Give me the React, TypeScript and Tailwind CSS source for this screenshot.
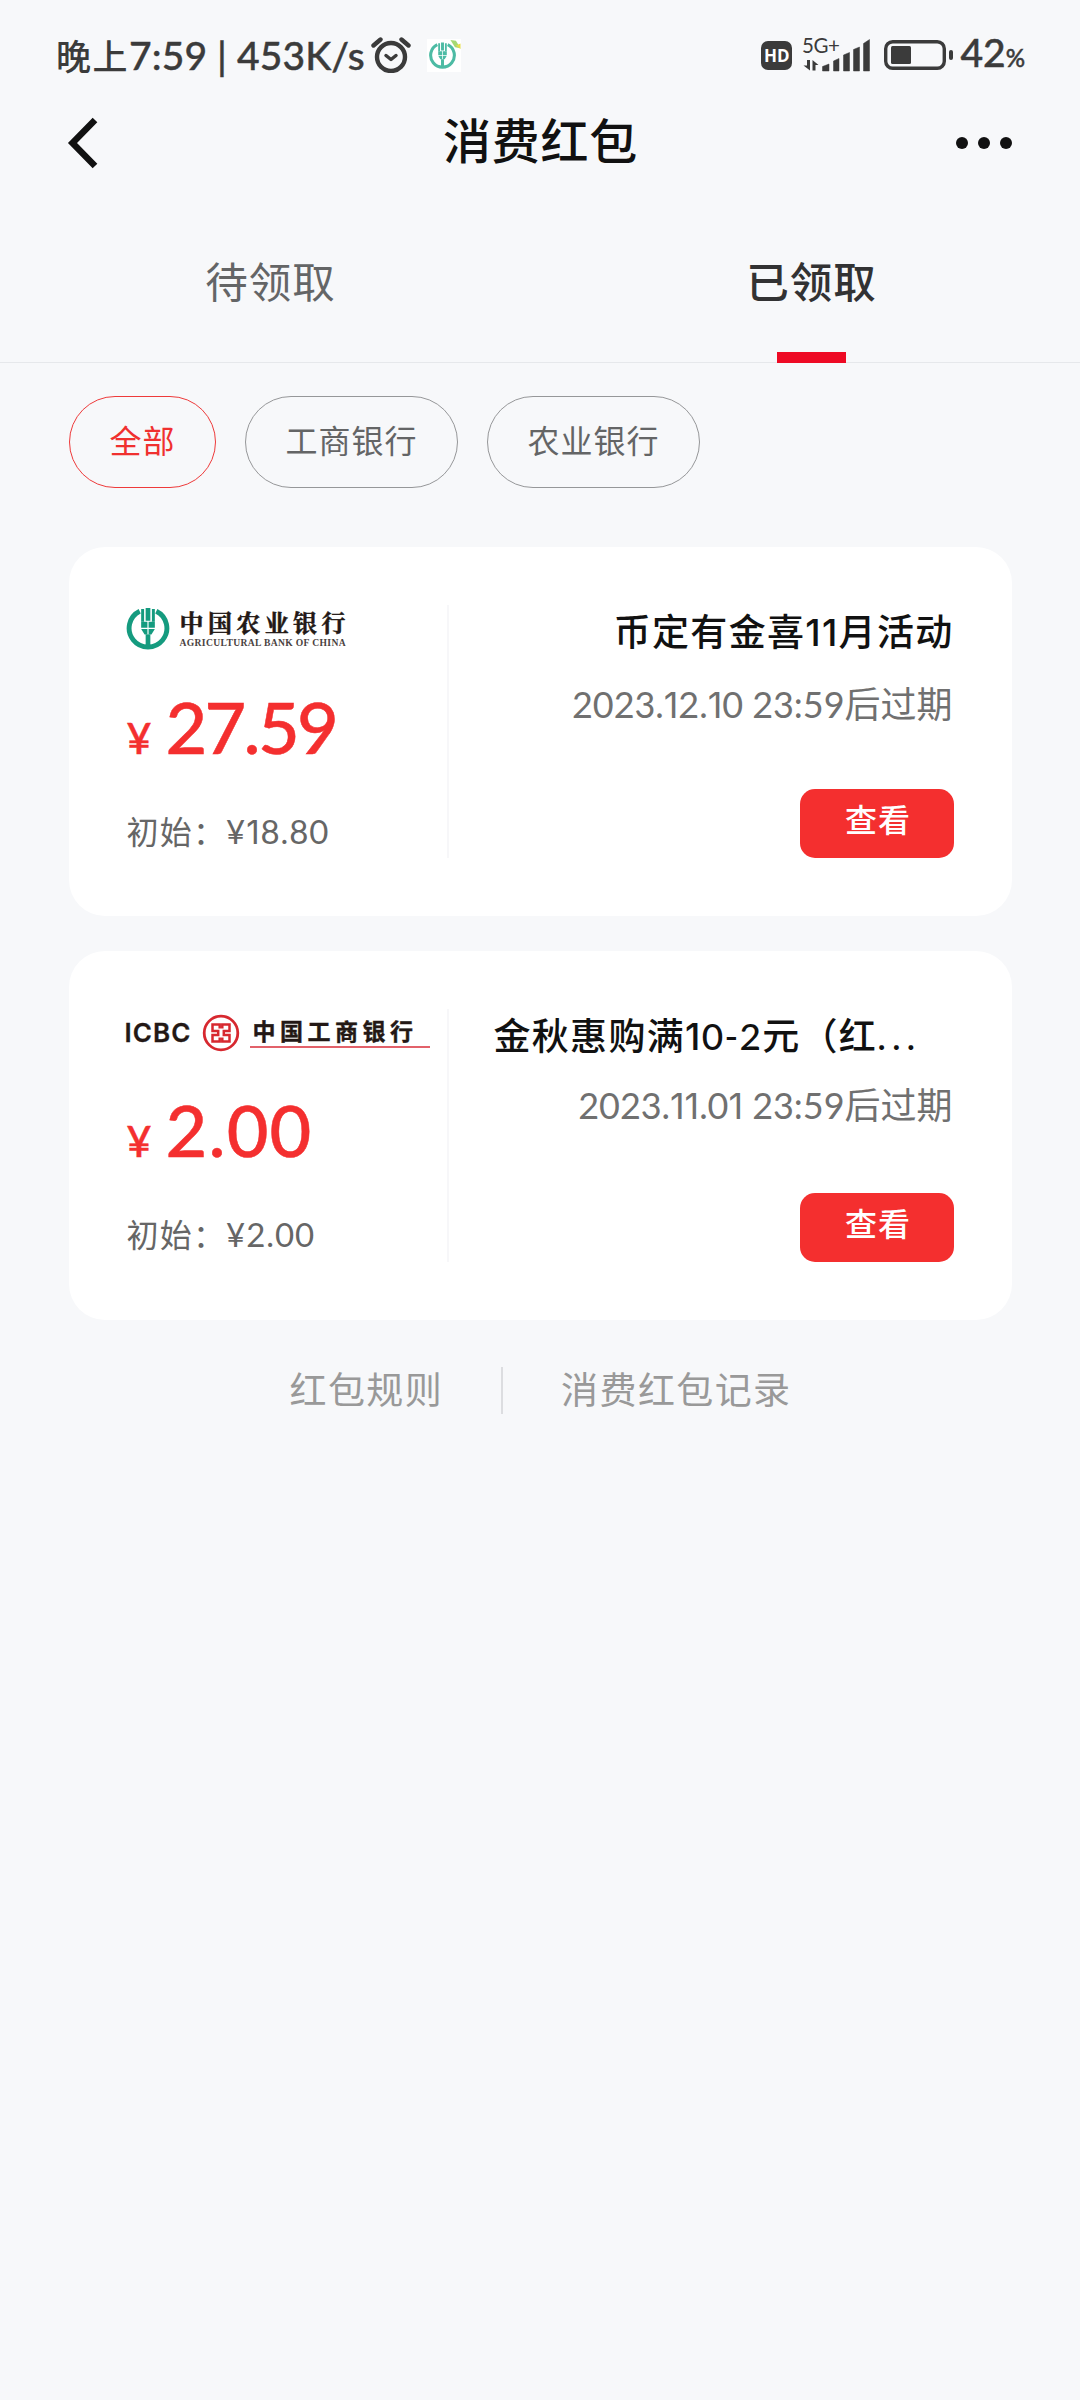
import * as React from "react"

import { useState } from "react";

interface RedPacket {
  id: number;
  bank: "abc" | "icbc";
  amount: string;
  initial: string;
  title: string;
  more?: boolean;
  expire: string;
}

const packets: RedPacket[] = [
  { id: 1, bank: "abc", amount: "27.59", initial: "18.80", title: "币定有金喜11月活动", expire: "2023.12.10 23:59" },
  { id: 2, bank: "icbc", amount: "2.00", initial: "2.00", title: "金秋惠购满10-2元（红", more: true, expire: "2023.11.01 23:59" },
];

const filters = ["全部", "工商银行", "农业银行"];

// the 1 is drawn without a foot, narrower than the other digits
function Figures({ children }: { children: string }) {
  return (
    <>
      {children.split(/(1+)/).map((part, i) =>
        part.startsWith("1") ? <span key={i} className="font-['Inter',sans-serif] leading-none">{part}</span> : part
      )}
    </>
  );
}

function AbcMark({ className, color }: { className: string; color: string }) {
  return (
    <svg viewBox="0 0 44 44" className={className} fill="none">
      <path d="M13.500 4.300A19.300 19.300 0 1 0 30.500 4.300" stroke={color} strokeWidth="5" />
      <path d="M15 2h3v13h-3zM19.600 1h4.800v13h-4.800zM26 2h3v13h-3z" fill={color} />
      <path d="M15 15h6.400v6.200H15zM22.600 15H29v6.200h-6.400zM15 22.400h6.400v5.800h-2.900zM22.600 22.400H29l-3.500 5.800h-2.900z" fill={color} />
      <path d="M19.600 28h4.800v12h-4.800z" fill={color} />
    </svg>
  );
}

function AbcLogo() {
  return (
    <div className="flex h-[44px] items-center gap-[10px] pt-[3px]">
      <AbcMark className="h-[43px] w-[44px]" color="#159b7f" />
      <div className="flex flex-col">
        <span className="font-['Noto_Serif_CJK_SC','Noto_Sans_CJK_SC',serif] text-[24px] leading-[25px] font-bold tracking-[4.4px] whitespace-nowrap text-[#231815] [-webkit-text-stroke:0.5px]">中国农业银行</span>
        <span className="mt-[3px] font-['Liberation_Serif',serif] text-[9.6px] leading-[12px] font-bold tracking-[0.35px] whitespace-nowrap text-[#4a4241]">AGRICULTURAL BANK OF CHINA</span>
      </div>
    </div>
  );
}

function IcbcLogo() {
  return (
    <div className="flex h-[44px] items-center">
      <span className="mt-[4px] ml-[-1px] w-[77px] font-['Inter',sans-serif] text-[26px] leading-[30px] font-semibold tracking-[1.1px] text-[#231815] [-webkit-text-stroke:0.3px]">ICBC</span>
      <svg viewBox="0 0 38 38" className="mt-[4px] h-[38px] w-[38px]" fill="none" stroke="#d7282f">
        <circle cx="19" cy="19" r="16.800" strokeWidth="2.800" />
        <path d="M17.700 14.500V10.500H10.500v6.500h5.700v4h-5.700v6.500h7.200v-4M20.300 14.500V10.500h7.200v6.500h-5.700v4h5.700v6.500h-7.200v-4" strokeWidth="2.500" />
      </svg>
      <div className="mt-[5px] ml-[10px] w-[180px] border-b-2 border-[#e2616a] pl-[3px]">
        <span className="block pb-[4px] font-['Noto_Sans_CJK_SC',sans-serif] text-[23px] leading-[24px] font-bold tracking-[4.500px] whitespace-nowrap text-[#231815] [-webkit-text-stroke:0.4px]">中国工商银行</span>
      </div>
    </div>
  );
}

function StatusBar() {
  return (
    <div className="flex h-[110px] items-center justify-between pr-[55px] pl-[56px] text-[#3b3b3b]">
      <div className="flex items-center">
        <span className="text-[35px] leading-[50px] font-medium tracking-[1.5px] whitespace-nowrap">
          晚上<span className="text-[39px] tracking-[0.1px] [-webkit-text-stroke:0.4px]">7:59 | 453K/s</span>
        </span>
        <svg viewBox="0 0 40 36" className="ml-[6px] h-[36px] w-[40px]" fill="none" stroke="#3b3b3b" strokeLinecap="round">
          <circle cx="20" cy="20" r="14" strokeWidth="4.400" />
          <path d="M2.500 8.500 9.500 2.500M30.500 2.500l7 6" strokeWidth="4.400" />
          <path d="m15 18.500 5 4 5-4" strokeWidth="3.500" strokeLinejoin="round" />
        </svg>
        <div className="relative ml-[16px] flex h-[33px] w-[34px] items-center justify-center bg-white">
          <AbcMark className="mr-[3px] h-[27px] w-[27px]" color="#4dbba4" />
          <svg viewBox="0 0 12 12" className="absolute top-0 right-0 h-[11px] w-[12px]">
            <path d="M1 1 7 2l5 8-6-1z" fill="#a5d873" />
            <path d="m7 7 5-2v6z" fill="#e3dc4b" />
          </svg>
        </div>
      </div>
      <div className="flex items-center">
        <div className="flex h-[29px] w-[31px] items-center justify-center rounded-[7px] bg-[#3b3b3b] font-['Open_Sans',sans-serif] text-[17px] leading-none font-bold text-white">HD</div>
        <svg viewBox="0 -8 70 44" className="mt-[-8px] ml-[10px] h-[44px] w-[70px]" fill="#3b3b3b">
          <text x="0" y="15.500" fontSize="20.500" fontFamily="Lato" textLength="38">5G+</text>
          <path d="M20.500 34v-4.500l6.500-2.500v7zM31.500 34V24l5.500-2.500V34zM41.500 34V18l6-2.500V34zM51.500 34V12.500l6-2.500V34zM61.500 34V6.500l6-4V34z" stroke="#3b3b3b" strokeWidth="0.500" strokeLinejoin="round" />
          <path d="M5 23h3v10.500L1.500 28.500H5zM10.500 33.500V23l6 5h-3v5.500z" />
        </svg>
        <svg viewBox="0 0 70 30" className="ml-[12px] h-[30px] w-[70px]" fill="none">
          <rect x="1.700" y="1.700" width="58.600" height="26.600" rx="7" stroke="#3b3b3b" strokeWidth="3.400" />
          <rect x="7" y="6" width="20" height="18" rx="1.500" fill="#3b3b3b" />
          <rect x="65" y="10" width="4" height="10" rx="2" fill="#3b3b3b" />
        </svg>
        <span className="ml-[6px] text-[39px] leading-[50px] font-medium whitespace-nowrap [-webkit-text-stroke:0.5px]">
          42<span className="text-[24px]">%</span>
        </span>
      </div>
    </div>
  );
}

function PacketCard({ packet }: { packet: RedPacket }) {
  return (
    <div className="flex h-[369px] w-[943px] rounded-[36px] bg-white">
      <div className="my-[58px] flex w-[380px] flex-col border-r-2 border-[#f7f7f9] pl-[57px]">
        {packet.bank === "abc" ? <AbcLogo /> : <IcbcLogo />}
        <div className="mt-[41px] flex h-[72px] items-baseline leading-[72px] font-medium text-[#f42f2f] [-webkit-text-stroke:0.5px]">
          <span className="w-[40px] pl-[1px] text-[43px]">¥</span>
          <span className={`text-[72px] ${packet.bank === "abc" ? "tracking-[-2.7px]" : "tracking-[1.2px]"}`}>{packet.amount}</span>
        </div>
        <div className="mt-[42px] pl-[1px] text-[32px] leading-[54px] tracking-[1.2px] whitespace-nowrap text-[#666]">
          初始：<span className="text-[33px] tracking-[0.9px]">¥<Figures>{packet.initial}</Figures></span>
        </div>
      </div>
      <div className="flex flex-1 flex-col items-end pt-[59px] pr-[58px]">
        <div className={`h-[52px] w-[460px] text-[37px] leading-[52px] font-medium tracking-[1.3px] whitespace-nowrap text-[#111] ${packet.bank === "abc" ? "text-right" : "text-left"}`}>
          <Figures>{packet.title}</Figures>
          {packet.more && <span className="tracking-[6px]">...</span>}
        </div>
        <div className={`${packet.bank === "abc" ? "mt-[20px] mb-[59px]" : "mt-[17px] mb-[62px]"} mr-[1px] h-[52px] text-[36px] leading-[52px] whitespace-nowrap text-[#707070]`}>
          <span className="tracking-[-0.05px]"><Figures>{packet.expire}</Figures></span>后过期
        </div>
        <button className="flex h-[69px] w-[154px] justify-center rounded-[15px] bg-[#f42f2f] pl-[3px] text-[32px] leading-[62px] font-medium tracking-[1px] text-white">
          查看
        </button>
      </div>
    </div>
  );
}

export default function App() {
  const [active, setActive] = useState(0);

  return (
    <div className="h-[2400px] w-[1080px] overflow-hidden bg-[#f7f8fa] font-['Lato','Noto_Sans_CJK_SC',sans-serif]">
      <StatusBar />

      <div className="flex h-[66px] items-center justify-between pr-[68px] pl-[67px]">
        <svg viewBox="0 0 56 52" className="h-[52px] w-[56px]" fill="none" stroke="#111" strokeWidth="6.500">
          <path d="M28 3 5.500 26 28 49" />
        </svg>
        <div className="mt-[-4px] ml-[2px] text-[48px] leading-[60px] font-medium tracking-[0.8px] text-[#111]">消费红包</div>
        <svg viewBox="0 0 56 12" className="h-[12px] w-[56px]" fill="#111">
          <circle cx="6" cy="6" r="6" />
          <circle cx="28" cy="6" r="6" />
          <circle cx="50" cy="6" r="6" />
        </svg>
      </div>

      <div className="grid h-[187px] grid-cols-2 text-[42.500px] tracking-[1px] shadow-[inset_0_-1px_0_#e6e8eb]">
        <div className="pt-[76px] pl-[1px] text-center leading-[60px] text-[#646566]">待领取</div>
        <div className="flex flex-col items-center justify-between pt-[76px] pl-[3px]">
          <span className="leading-[60px] font-medium text-[#323233]">已领取</span>
          <div className="h-[11px] w-[69px] bg-[#ee0a24]" />
        </div>
      </div>

      <div className="flex gap-[29px] px-[69px] pt-[33px]">
        {filters.map((name, i) => (
          <button
            key={name}
            onClick={() => setActive(i)}
            className={`h-[92px] rounded-full border px-[39.5px] pb-[3px] text-[32px] leading-[85px] tracking-[1px] whitespace-nowrap ${active === i ? "border-[#ee3a3a] text-[#f0302f]" : "border-[#969799] text-[#646566]"}`}
          >
            {name}
          </button>
        ))}
      </div>

      <div className="mt-[59px] flex flex-col items-center gap-[35px]">
        {packets.map((packet) => (
          <PacketCard key={packet.id} packet={packet} />
        ))}
      </div>

      <div className="mt-[47px] flex h-[47px] items-center justify-center pl-[1px] text-[37px] leading-[47px] tracking-[1.4px] text-[#999]">
        <span className="pb-[2px]">红包规则</span>
        <span className="mr-[58px] ml-[58px] h-[47px] w-[2px] bg-[#dcdde0]" />
        <span className="pb-[2px]">消费红包记录</span>
      </div>
    </div>
  );
}
